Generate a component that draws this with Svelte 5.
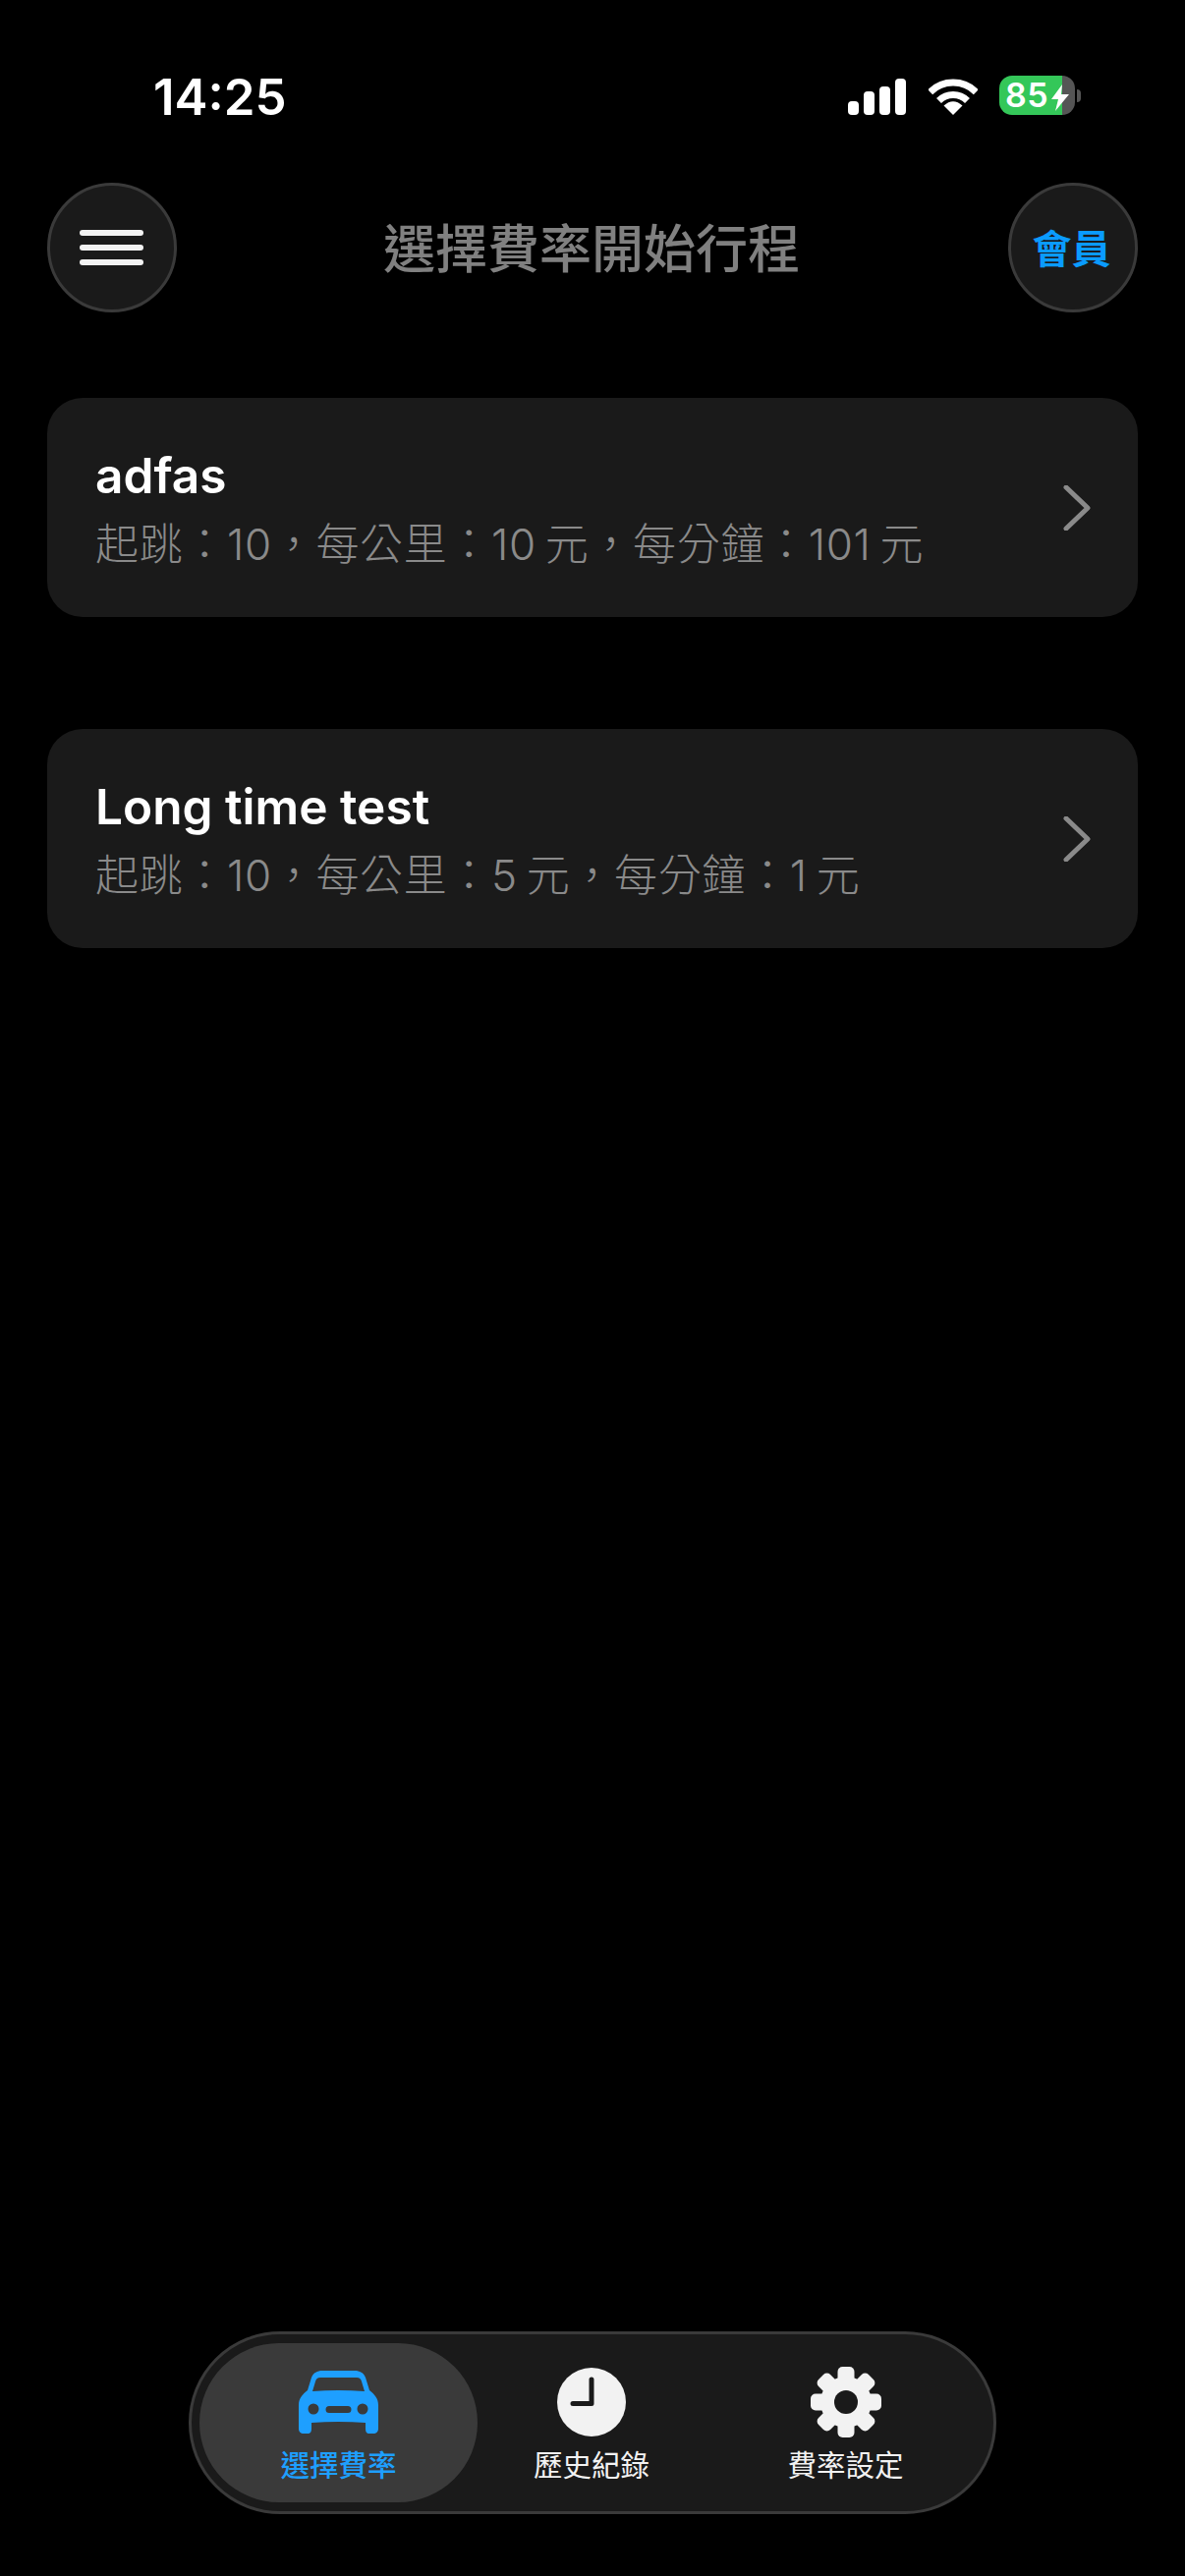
<script lang="ts">
	const rates = [
		{ name: 'adfas', detail: '起跳：10，每公里：10元，每分鐘：101元' },
		{ name: 'Long time test', detail: '起跳：10，每公里：5元，每分鐘：1元' }
	];

	const teeth = [0, 45, 90, 135, 180, 225, 270, 315];
</script>

<div class="page">
	<div class="status">
		<span class="time">14:25</span>
		<div class="status-icons">
			<div class="signal">
				<i class="b1"></i><i class="b2"></i><i class="b3"></i><i class="b4"></i>
			</div>
			<svg class="wifi" width="50" height="37" viewBox="0 0 50 37">
				<path d="M25 37 L15.5 27.5 Q25 19 34.5 27.5 Z" fill="#fff" />
				<path d="M10.5 22.5 A20.5 20.5 0 0 1 39.5 22.5" fill="none" stroke="#fff" stroke-width="7" />
				<path d="M1.7 13.7 A33 33 0 0 1 48.3 13.7" fill="none" stroke="#fff" stroke-width="7" />
			</svg>
			<div class="battery">
				<div class="battery-body">
					<span class="level">85</span>
					<svg class="bolt" width="18" height="27" viewBox="0 0 18 27">
						<path d="M11 0 L0 15 H7 L4 27 L18 10 H10 Z" fill="#fff" />
					</svg>
				</div>
				<div class="nub"></div>
			</div>
		</div>
	</div>

	<header class="header">
		<button class="round menu" aria-label="選單">
			<span></span><span></span><span></span>
		</button>
		<h1>選擇費率開始行程</h1>
		<button class="round member">會員</button>
	</header>

	<main class="list">
		{#each rates as rate}
			<div class="card">
				<div class="card-text">
					<div class="name">{rate.name}</div>
					<div class="detail">
						{#each rate.detail.split('元') as part, i}{#if i > 0}<span class="yuan">元</span>{/if}{part}{/each}
					</div>
				</div>
				<svg class="chevron" width="28" height="46" viewBox="0 0 28 46">
					<path d="M3 2 L25 23 L3 44" fill="none" stroke="#8a8a8a" stroke-width="5" stroke-linecap="round" stroke-linejoin="round" />
				</svg>
			</div>
		{/each}
	</main>

	<nav class="tabs">
		<div class="tab active">
			<svg width="81" height="72" viewBox="0 -4 81 72">
				<path
					fill="#1e9fff"
					fill-rule="evenodd"
					d="M24 0 H57 C62 0 66 2 68 7 L72 20 C77 24 81 28 81 35 V59 C81 62 79 64 76 64 H72 C69 64 68 62 68 59 V53 Q40 51 13 53 V59 C13 62 12 64 9 64 H5 C2 64 0 62 0 59 V35 C0 28 4 24 9 20 L13 7 C15 2 19 0 24 0 Z
					M22 7 C19 7 18 8 17 11 L14 21 Q40 19 67 21 L64 11 C63 8 62 7 59 7 Z
					M15 33.5 A5.5 5.5 0 1 0 15 44.5 A5.5 5.5 0 1 0 15 33.5 Z
					M65 33.5 A5.5 5.5 0 1 0 65 44.5 A5.5 5.5 0 1 0 65 33.5 Z
					M31 36 A3.5 3.5 0 0 0 31 43 H50 A3.5 3.5 0 0 0 50 36 Z"
				/>
			</svg>
			<span>選擇費率</span>
		</div>
		<div class="tab">
			<svg width="72" height="72" viewBox="0 0 72 72">
				<circle cx="36" cy="36" r="35" fill="#f2f2f2" />
				<path d="M36 13 V37.5 H17" fill="none" stroke="#1a1a1a" stroke-width="5" stroke-linecap="round" stroke-linejoin="round" />
			</svg>
			<span>歷史紀錄</span>
		</div>
		<div class="tab">
			<svg width="72" height="72" viewBox="0 0 72 72">
				<circle cx="36" cy="36" r="26" fill="#f2f2f2" />
				{#each teeth as angle}
					<rect x="27.5" y="0" width="17" height="22" rx="5" fill="#f2f2f2" transform="rotate({angle} 36 36)" />
				{/each}
				<circle cx="36" cy="36" r="12" fill="#1a1a1a" />
			</svg>
			<span>費率設定</span>
		</div>
	</nav>
</div>

<style>
	:global(body) {
		margin: 0;
		background: #000;
	}

	.page {
		display: flex;
		flex-direction: column;
		height: 2622px;
		background: #000;
		font-family: Inter, "Noto Sans CJK TC", sans-serif;
		overflow: hidden;
	}

	.status {
		display: flex;
		justify-content: space-between;
		align-items: center;
		height: 40px;
		padding: 77px 106px 0 156px;
	}

	.time {
		font-size: 51px;
		font-weight: 600;
		color: #fff;
		line-height: 40px;
		position: relative;
		top: 2px;
	}

	.status-icons {
		display: flex;
		align-items: center;
	}

	.signal {
		display: flex;
		align-items: flex-end;
		gap: 5px;
		height: 37px;
		margin-top: 2px;
		margin-left: 2px;
	}

	.signal i {
		display: block;
		width: 11px;
		border-radius: 4px;
		background: #fff;
	}

	.b1 { height: 14px; }
	.b2 { height: 24px; }
	.b3 { height: 29px; }
	.b4 { height: 37px; }

	.wifi {
		margin-left: 23px;
		margin-top: 2px;
	}

	.battery {
		display: flex;
		align-items: center;
		margin-left: 22px;
	}

	.battery-body {
		position: relative;
		display: flex;
		align-items: center;
		width: 77px;
		height: 40px;
		border-radius: 13px;
		background: linear-gradient(90deg, #34c759 0 64px, #555 64px);
	}

	.level {
		margin-left: 6px;
		font-size: 34px;
		font-weight: 600;
		line-height: 40px;
		color: #fff;
		letter-spacing: 0.5px;
	}

	.bolt {
		position: absolute;
		left: 53px;
		top: 9px;
	}

	.nub {
		width: 4px;
		height: 13px;
		margin-left: 2px;
		border-radius: 0 4px 4px 0;
		background: #555;
	}

	.header {
		display: flex;
		align-items: center;
		padding: 0 48px;
		margin-top: 69px;
	}

	.header h1 {
		flex: 1;
		margin: 0;
		text-align: center;
		font-size: 53px;
		font-weight: 500;
		color: #808080;
		line-height: 60px;
		position: relative;
		top: 2px;
		left: -1px;
	}

	.round {
		display: flex;
		flex-direction: column;
		align-items: center;
		justify-content: center;
		width: 132px;
		height: 132px;
		padding: 0;
		box-sizing: border-box;
		border: 3px solid #3a3a3a;
		border-radius: 50%;
		background: #1a1a1a;
		font-family: inherit;
	}

	.menu {
		gap: 9px;
		padding-right: 2px;
	}

	.menu span {
		display: block;
		width: 65px;
		height: 6px;
		border-radius: 3px;
		background: #f2f2f2;
	}

	.member {
		padding-right: 3px;
		padding-bottom: 3px;
		font-size: 40px;
		font-weight: 700;
		color: #0a9bff;
	}

	.list {
		display: flex;
		flex-direction: column;
		gap: 114px;
		padding: 87px 48px 0;
		flex: 1;
	}

	.card {
		display: flex;
		align-items: center;
		justify-content: space-between;
		height: 223px;
		padding: 0 48px 0 49px;
		box-sizing: border-box;
		border-radius: 36px;
		background: #1a1a1a;
	}

	.card-text {
		padding-top: 4px;
	}

	.name {
		font-size: 49.6px;
		font-weight: 600;
		color: #fff;
		line-height: 60px;
	}

	.detail {
		margin-top: 10px;
		font-size: 44px;
		font-weight: 300;
		letter-spacing: 0.65px;
		color: #8a8a8a;
		line-height: 60px;
	}

	.yuan {
		margin-left: 9px;
	}

	.tabs {
		display: grid;
		grid-template-columns: 283px 232px 285px;
		width: 822px;
		height: 186px;
		box-sizing: border-box;
		margin: 0 auto 63px;
		padding: 9px 8px;
		border: 3px solid #3a3a3a;
		border-radius: 93px;
		background: #1a1a1a;
	}

	.tab {
		display: flex;
		flex-direction: column;
		align-items: center;
		padding-top: 24px;
		border-radius: 81px;
		color: #f2f2f2;
		font-size: 29.5px;
		font-weight: 400;
		line-height: 40px;
	}

	.tab svg {
		display: block;
		margin-bottom: 8px;
	}

	.tab.active {
		background: #3a3a3a;
		color: #1e9fff;
		font-weight: 500;
	}
</style>
